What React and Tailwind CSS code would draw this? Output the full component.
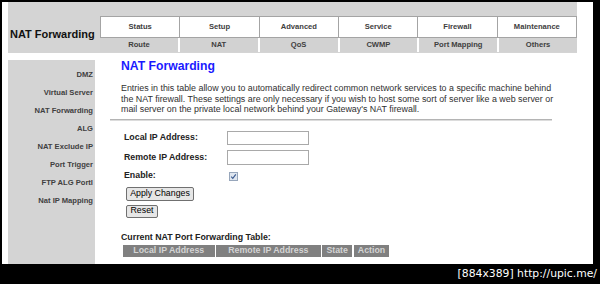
export default function App() {
  const tabs1 = ["Status", "Setup", "Advanced", "Service", "Firewall", "Maintenance"];
  const tabs2 = ["Route", "NAT", "QoS", "CWMP", "Port Mapping", "Others"];
  const side = ["DMZ", "Virtual Server", "NAT Forwarding", "ALG", "NAT Exclude IP", "Port Trigger", "FTP ALG Portl", "Nat IP Mapping"];
  return (
    <div className="w-[600px] h-[284px] bg-black flex flex-col overflow-hidden font-['Liberation_Sans',Arial,sans-serif]">
      <div className="h-[264px] pt-[2px] pl-[2px] pr-[7px]">
        <div className="h-full bg-white pl-[6px] pr-[16px] flex flex-col">
          {/* top bar */}
          <div className="h-[51px] bg-[#d4d4d4] flex shrink-0">
            <div className="w-[92px] pl-[2px] pt-[26px] text-[11px] leading-[12px] font-bold text-[#111]">NAT Forwarding</div>
            <div className="flex-1 pt-[14px] flex flex-col">
              <div className="grid grid-cols-6 gap-px p-px bg-[#a4a4a4] h-[22px]">
                {tabs1.map((t) => (
                  <div key={t} className="bg-white flex items-center justify-center text-[7.6px] font-bold text-[#404040]">{t}</div>
                ))}
              </div>
              <div className="grid grid-cols-6 gap-[2px] bg-white h-[14px]">
                {tabs2.map((t) => (
                  <div key={t} className="bg-[#d2d2d2] flex items-center justify-center text-[7.6px] font-bold text-[#404040]">{t}</div>
                ))}
              </div>
            </div>
          </div>
          <div className="flex flex-1 mt-[7px]">
            {/* sidebar */}
            <div className="w-[87px] bg-[#d4d4d4] pt-[6px] pr-[2px] flex flex-col">
              {side.map((s) => (
                <div key={s} className="h-[18px] leading-[18px] text-right text-[7.6px] font-bold text-[#404040] whitespace-nowrap">{s}</div>
              ))}
            </div>
            {/* main */}
            <div className="ml-[15px] w-[442px] flex flex-col">
              <div className="pl-[11px] text-[12.2px] leading-[14px] font-bold text-[#1a1aff] -mt-px">NAT Forwarding</div>
              <div className="pl-[11px] mt-[10px] text-[8.9px] leading-[10.5px] text-[#303030] whitespace-nowrap">
                Entries in this table allow you to automatically redirect common network services to a specific machine behind<br />
                the NAT firewall. These settings are only necessary if you wish to host some sort of server like a web server or<br />
                mail server on the private local network behind your Gateway's NAT firewall.
              </div>
              <div className="mt-[4px] h-[2px] bg-[#b4b4b4] border-b border-[#dcdcdc]"></div>
              <div className="pl-[14px] mt-[7px] text-[8.8px] text-[#222]">
                <div className="flex items-center h-[20px]">
                  <div className="w-[103px] font-bold">Local IP Address:</div>
                  <div className="w-[82px] h-[14px] border border-[#a9a9a9] bg-white"></div>
                </div>
                <div className="flex items-center h-[20px]">
                  <div className="w-[103px] font-bold">Remote IP Address:</div>
                  <div className="w-[82px] h-[15px] border border-[#a9a9a9] bg-white"></div>
                </div>
                <div className="flex items-center h-[17px]">
                  <div className="w-[105px] font-bold">Enable:</div>
                  <svg width="9" height="9" viewBox="0 0 9 9">
                    <rect x="0.5" y="0.5" width="8" height="8" fill="#dfe6ef" stroke="#97a6bb" />
                    <path d="M2.2 4.6 L3.8 6.4 L6.8 2.4" fill="none" stroke="#3a5a90" strokeWidth="1.1" />
                  </svg>
                </div>
                <div className="pl-[2px] mt-[2px]">
                  <div className="w-[68px] h-[14px] border border-[#707070] rounded-[2px] bg-[#e6e6e6] flex items-center justify-center text-[8.8px] text-black">Apply Changes</div>
                  <div className="mt-[4px] w-[32px] h-[13px] border border-[#707070] rounded-[2px] bg-[#e6e6e6] flex items-center justify-center text-[8.8px] text-black">Reset</div>
                </div>
              </div>
              <div className="pl-[11px] mt-[14px] text-[8.8px] leading-[11px] font-bold text-[#222]">Current NAT Port Forwarding Table:</div>
              <div className="pl-[13px] mt-[2px] flex gap-[1.6px] text-[8.8px] font-bold text-[#d4d4d4]">
                <div className="w-[91.5px] h-[12px] bg-[#808080] flex items-center justify-center">Local IP Address</div>
                <div className="w-[104.5px] h-[12px] bg-[#808080] flex items-center justify-center">Remote IP Address</div>
                <div className="w-[30px] h-[12px] bg-[#808080] flex items-center justify-center">State</div>
                <div className="w-[35.5px] h-[12px] bg-[#808080] flex items-center justify-center">Action</div>
              </div>
            </div>
          </div>
        </div>
      </div>
      <div className="h-[20px] flex items-center justify-end pr-[3px] text-white text-[10.8px] font-['DejaVu_Sans',sans-serif]">[884x389] http://upic.me/</div>
    </div>
  );
}
